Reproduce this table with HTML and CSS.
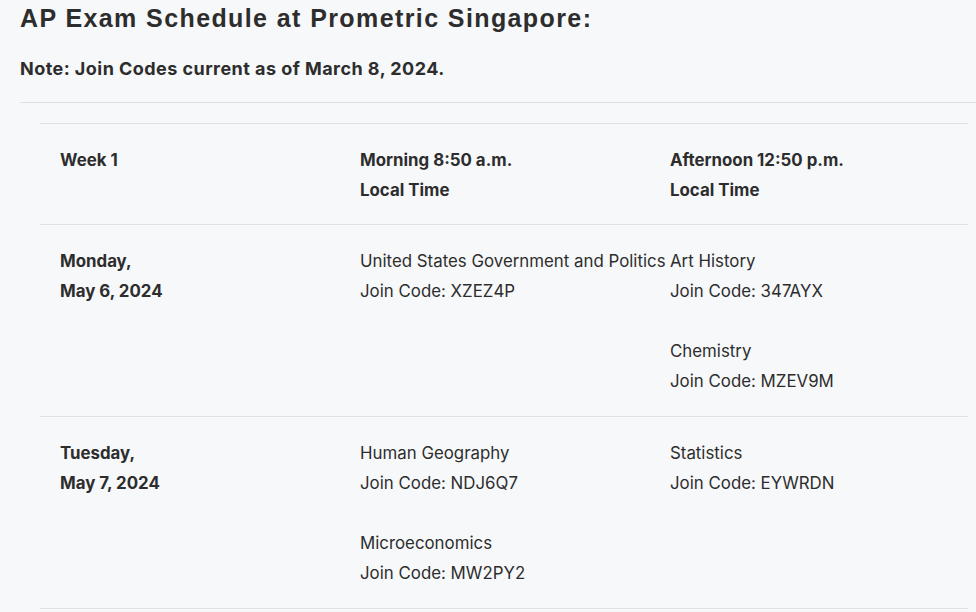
FILE: index.html
```html
<!DOCTYPE html>
<html lang="en">
<head>
<meta charset="utf-8">
<title>AP Exam Schedule at Prometric Singapore</title>
<link rel="stylesheet" href="styles.css">
</head>
<body>
<main class="page">
  <h2 class="title">AP Exam Schedule at Prometric Singapore:</h2>
  <p class="note">Note: Join Codes current as of March 8, 2024.</p>
  <hr class="rule">
  <div class="schedule">
    <div class="row head">
      <div class="cell"><p>Week 1</p></div>
      <div class="cell wide"><p>Morning 8:50 a.m.<br>Local Time</p></div>
      <div class="cell"><p>Afternoon 12:50 p.m.<br>Local Time</p></div>
    </div>
    <div class="row">
      <div class="cell day"><p>Monday,<br>May 6, 2024</p></div>
      <div class="cell wide"><p>United States Government and Politics<br>Join Code: XZEZ4P</p></div>
      <div class="cell"><p>Art History<br>Join Code: 347AYX</p><p>Chemistry<br>Join Code: MZEV9M</p></div>
    </div>
    <div class="row">
      <div class="cell day"><p>Tuesday,<br>May 7, 2024</p></div>
      <div class="cell wide"><p>Human Geography<br>Join Code: NDJ6Q7</p><p>Microeconomics<br>Join Code: MW2PY2</p></div>
      <div class="cell"><p>Statistics<br>Join Code: EYWRDN</p></div>
    </div>
  </div>
</main>
</body>
</html>
```
FILE: styles.css
```css
html, body {
  margin: 0;
  padding: 0;
  background: #f7f8fa;
}
body {
  font-family: Inter, "Noto Sans", sans-serif;
  color: #2d2d2d;
  font-size: 16.85px;
  overflow: hidden;
}
.page {
  padding: 2px 0 0 20px;
}
.title {
  margin: 0;
  font-family: "Liberation Sans", Arial, sans-serif;
  font-size: 25px;
  letter-spacing: 1.4px;
  line-height: 32px;
  font-weight: 700;
}
.note {
  margin: 21px 0 0;
  font-size: 18px;
  letter-spacing: 0.45px;
  line-height: 28px;
  font-weight: 700;
}
.rule {
  margin: 19px 0 0;
  border: 0;
  border-top: 1px solid #dfe1e5;
  height: 0;
}
.schedule {
  margin: 20px 8px 0 20px;
}
.row {
  display: grid;
  grid-template-columns: 300px 310px 1fr;
  border-top: 1px solid #dfe1e5;
}
.row:last-child {
  border-bottom: 1px solid #dfe1e5;
}
.cell {
  padding: 21px 0 20px 20px;
  line-height: 30px;
}
.head .cell {
  padding-bottom: 19px;
  font-weight: 700;
}
.cell p {
  margin: 0 0 30px;
}
.cell p:last-child {
  margin-bottom: 0;
}
.wide {
  white-space: nowrap;
}
.day {
  font-weight: 700;
}
```
